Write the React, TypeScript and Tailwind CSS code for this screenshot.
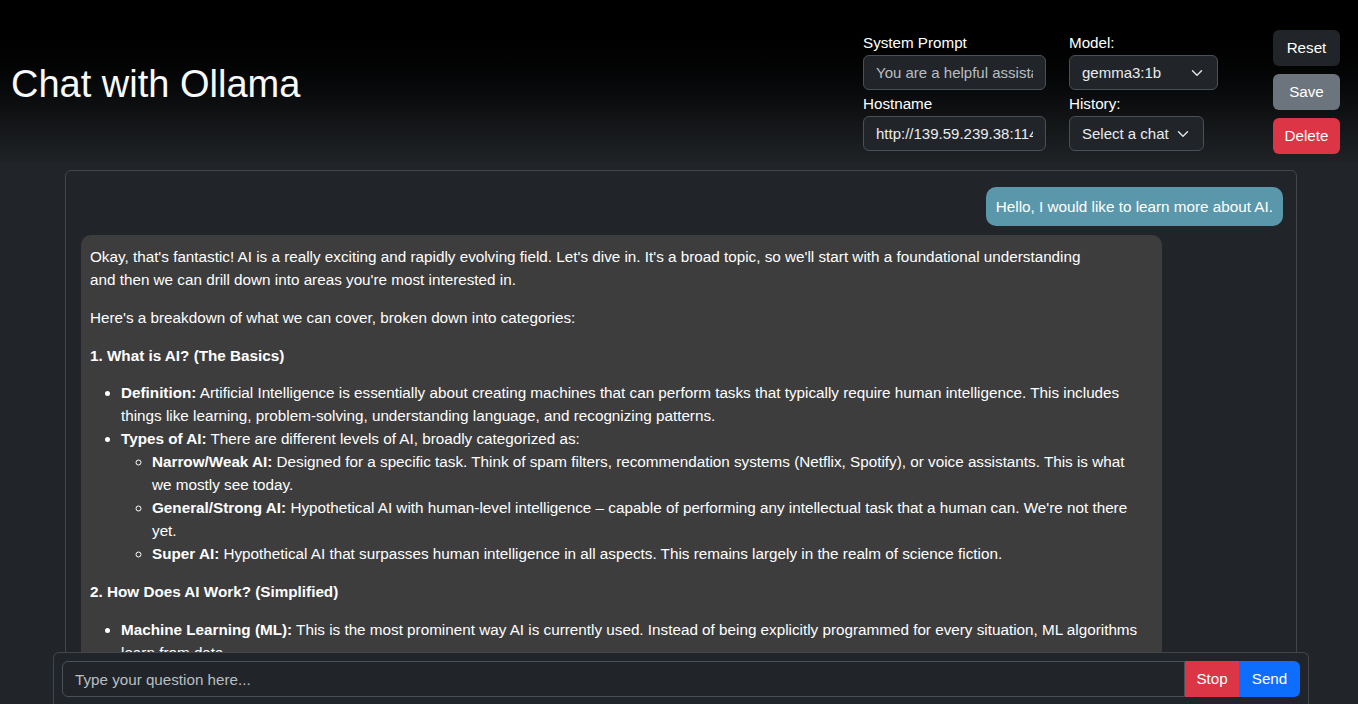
function Chevron() {
  return (
    <svg width="16" height="12" viewBox="0 0 16 16" fill="none" stroke="#dee2e6" strokeWidth="2" strokeLinecap="round" strokeLinejoin="round">
      <path d="m2 5 6 6 6-6" />
    </svg>
  )
}

function FakeSelect({ value, width }: { value: string; width: string }) {
  return (
    <div className={`flex h-[35px] items-center justify-between rounded-[6px] border border-[#495057] bg-[#212529] pl-[12px] pr-[12px] text-[15px] text-[#e9ecef] ${width}`}>
      <span>{value}</span>
      <Chevron />
    </div>
  )
}

export default function App() {
  return (
    <div className="relative h-screen overflow-hidden bg-[#212529] font-['Liberation_Sans',Arial,sans-serif] text-white">
      <header className="flex h-[162px] items-start justify-between bg-gradient-to-b from-black to-[#202326] pl-[11px] pr-[18px] pt-[30px]">
        <h1 className="mt-[32px] text-[38px] leading-[44px] text-[#f8f9fa]">Chat with Ollama</h1>
        <div className="flex">
          <div className="mt-[3px] grid grid-cols-[183px_auto] gap-x-[23px] gap-y-[1px] text-[15.2px] leading-[20px]">
            <div>
              <div className="mb-[2px]">System Prompt</div>
              <input
                className="h-[35px] w-[183px] rounded-[6px] border border-[#495057] bg-[#212529] px-[12px] text-[15px] text-[#e9ecef] outline-none placeholder:text-[#b9bec3]"
                placeholder="You are a helpful assistant."
              />
            </div>
            <div>
              <div className="mb-[2px]">Model:</div>
              <FakeSelect value="gemma3:1b" width="w-[149px]" />
            </div>
            <div>
              <div className="mb-[2px]">Hostname</div>
              <input
                className="h-[35px] w-[183px] rounded-[6px] border border-[#495057] bg-[#212529] px-[12px] text-[15px] text-[#e9ecef] outline-none"
                defaultValue="http://139.59.239.38:11434"
              />
            </div>
            <div>
              <div className="mb-[2px]">History:</div>
              <FakeSelect value="Select a chat" width="w-[135px]" />
            </div>
          </div>
          <div className="ml-[55px] flex w-[67px] flex-col gap-[8px] text-[15.2px]">
            <button className="h-[36px] rounded-[6px] bg-[#212529] text-white">Reset</button>
            <button className="h-[36px] rounded-[6px] bg-[#6c757d] text-white">Save</button>
            <button className="h-[36px] rounded-[6px] bg-[#dc3545] text-white">Delete</button>
          </div>
        </div>
      </header>

      <main className="ml-[65px] mr-[61px] mt-[8px] h-[700px] overflow-hidden rounded-[6px] border border-[#43474c] bg-[#212529] pl-[15px] pr-[13px] pt-[16px] text-[15.25px] leading-[23px]">
        <div className="flex justify-end">
          <div className="rounded-[10px] bg-[#5b97aa] px-[10px] py-[8px]">Hello, I would like to learn more about AI.</div>
        </div>
        <div className="mt-[9px] w-[1081px] rounded-[10px] bg-[#3d3d3d] pb-[6px] pl-[9px] pr-[20px] pt-[10px]">
          <p className="mb-[15px]">
            Okay, that's fantastic! AI is a really exciting and rapidly evolving field. Let's dive in. It's a broad topic, so we'll start with a foundational understanding
            <br />
            and then we can drill down into areas you're most interested in.
          </p>
          <p className="mb-[15px]">Here's a breakdown of what we can cover, broken down into categories:</p>
          <p className="mb-[15px] font-bold">1. What is AI? (The Basics)</p>
          <ul className="mb-[15px] list-disc pl-[31px]">
            <li className="leading-[22.5px]">
              <b>Definition:</b> Artificial Intelligence is essentially about creating machines that can perform tasks that typically require human intelligence. This includes things like learning, problem-solving, understanding language, and recognizing patterns.
            </li>
            <li>
              <b>Types of AI:</b> There are different levels of AI, broadly categorized as:
              <ul className="list-[circle] pl-[31px]">
                <li>
                  <b>Narrow/Weak AI:</b> Designed for a specific task. Think of spam filters, recommendation systems (Netflix, Spotify), or voice assistants. This is what we mostly see today.
                </li>
                <li>
                  <b>General/Strong AI:</b> Hypothetical AI with human-level intelligence – capable of performing any intellectual task that a human can. We're not there yet.
                </li>
                <li>
                  <b>Super AI:</b> Hypothetical AI that surpasses human intelligence in all aspects. This remains largely in the realm of science fiction.
                </li>
              </ul>
            </li>
          </ul>
          <p className="mb-[15px] font-bold">2. How Does AI Work? (Simplified)</p>
          <ul className="mb-[15px] list-disc pl-[31px]">
            <li>
              <b>Machine Learning (ML):</b> This is the most prominent way AI is currently used. Instead of being explicitly programmed for every situation, ML algorithms learn from data.
            </li>
          </ul>
        </div>
      </main>

      <div className="absolute bottom-0 left-[53px] right-[49px] h-[52px] rounded-t-[6px] border border-b-0 border-[#43474c] bg-[#212529] px-[8px] pt-[8px]">
        <div className="flex h-[36px] text-[15.2px]">
          <input
            className="h-full flex-1 rounded-l-[6px] border border-[#495057] bg-[#212529] px-[12px] text-[#e9ecef] outline-none placeholder:text-[#b9bec3]"
            placeholder="Type your question here..."
          />
          <button className="h-full w-[54px] bg-[#dc3545] text-white">Stop</button>
          <button className="h-full w-[61px] rounded-r-[6px] bg-[#0d6efd] text-white">Send</button>
        </div>
      </div>
    </div>
  )
}
